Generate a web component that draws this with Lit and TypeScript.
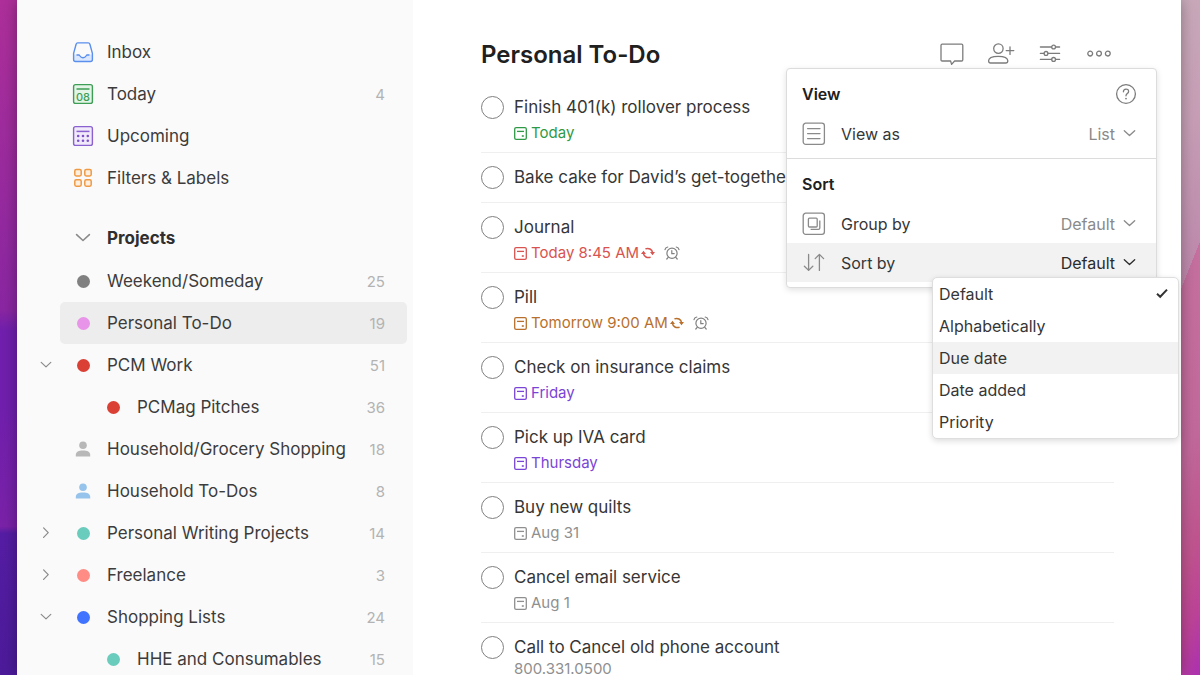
import { LitElement, html, css, svg, nothing } from "lit";
import { customElement, state } from "lit/decorators.js";
import { classMap } from "lit/directives/class-map.js";
import { styleMap } from "lit/directives/style-map.js";

type Tone = "green" | "red" | "orange" | "purple" | "grey";

interface Task {
  title: string;
  due?: string;
  tone?: Tone;
  repeats?: boolean;
  note?: string;
}

interface Project {
  name: string;
  count: number;
  color: string;
  person?: boolean;
  child?: boolean;
  chevron?: "open" | "closed";
}

const TASKS: Task[] = [
  { title: "Finish 401(k) rollover process", due: "Today", tone: "green" },
  { title: "Bake cake for David’s get-together" },
  { title: "Journal", due: "Today 8:45 AM", tone: "red", repeats: true },
  { title: "Pill", due: "Tomorrow 9:00 AM", tone: "orange", repeats: true },
  { title: "Check on insurance claims", due: "Friday", tone: "purple" },
  { title: "Pick up IVA card", due: "Thursday", tone: "purple" },
  { title: "Buy new quilts", due: "Aug 31", tone: "grey" },
  { title: "Cancel email service", due: "Aug 1", tone: "grey" },
  { title: "Call to Cancel old phone account", note: "800.331.0500" },
];

const PROJECTS: Project[] = [
  { name: "Weekend/Someday", count: 25, color: "#808080" },
  { name: "Personal To-Do", count: 19, color: "#e894e8" },
  { name: "PCM Work", count: 51, color: "#db4035", chevron: "open" },
  { name: "PCMag Pitches", count: 36, color: "#db4035", child: true },
  { name: "Household/Grocery Shopping", count: 18, color: "#b8b8b8", person: true },
  { name: "Household To-Dos", count: 8, color: "#96c3eb", person: true },
  { name: "Personal Writing Projects", count: 14, color: "#6accbc", chevron: "closed" },
  { name: "Freelance", count: 3, color: "#ff8d85", chevron: "closed" },
  { name: "Shopping Lists", count: 24, color: "#4073ff", chevron: "open" },
  { name: "HHE and Consumables", count: 15, color: "#6accbc", child: true },
];

const SORT_OPTIONS = ["Default", "Alphabetically", "Due date", "Date added", "Priority"];

const inboxIcon = svg`<svg width="24" height="24" viewBox="0 0 24 24" fill="none" stroke="#5a8fee" stroke-width="1.4" stroke-linejoin="round" stroke-linecap="round">
  <path d="M2.7 14.6 H7.6 C8.4 14.6 8.2 17.6 11.7 17.6 C15.2 17.6 15 14.6 15.8 14.6 H21.3 V19.6 Q21.3 21.4 19.5 21.4 H4.5 Q2.7 21.4 2.7 19.6 Z" fill="#dbe8fd" stroke="none"/>
  <path d="M6.7 2.9 H17.3 Q18.5 2.9 18.9 4.2 L21.4 13.4 V19.6 Q21.4 21.5 19.5 21.5 H4.5 Q2.6 21.5 2.6 19.6 V13.4 L5.1 4.2 Q5.5 2.9 6.7 2.9 Z"/>
  <path d="M6 15 H8 C8.8 15 9 17.8 12 17.8 C15 17.8 15.2 15 16 15 H18"/></svg>`;

const todayIcon = svg`<svg width="24" height="24" viewBox="0 0 24 24" fill="none" stroke="#3f9e55" stroke-width="1.4">
  <rect x="2.6" y="2.6" width="18.8" height="18.8" rx="2" fill="#e4f4e7"/>
  <path d="M5.5 7 H18.5" stroke-width="1.5"/>
  <text x="12" y="18.8" text-anchor="middle" font-family="Inter, sans-serif" font-size="11" font-weight="500" fill="#3f9e55" stroke="none">08</text></svg>`;

const upcomingIcon = svg`<svg width="24" height="24" viewBox="0 0 24 24" fill="none" stroke="#8a62cf" stroke-width="1.4">
  <rect x="2.6" y="2.6" width="18.8" height="18.8" rx="2" fill="#f1eafb"/>
  <path d="M5.5 7.4 H18.5" stroke-width="1.5"/>
  <g fill="#7d52c8" stroke="none"><circle cx="7.2" cy="12" r="1.3"/><circle cx="12" cy="12" r="1.3"/><circle cx="16.8" cy="12" r="1.3"/><circle cx="7.2" cy="16.8" r="1.3"/><circle cx="12" cy="16.8" r="1.3"/><circle cx="16.8" cy="16.8" r="1.3"/></g></svg>`;

const filtersIcon = svg`<svg width="24" height="24" viewBox="0 0 24 24" fill="#fdf0e0" stroke="#ef9a45" stroke-width="1.5">
  <rect x="3.8" y="3.6" width="6.4" height="6.4" rx="1.4"/><rect x="13.8" y="3.6" width="6.4" height="6.4" rx="1.4"/>
  <rect x="3.8" y="13.8" width="6.4" height="6.4" rx="1.4"/><rect x="13.8" y="13.8" width="6.4" height="6.4" rx="1.4"/></svg>`;

const NAV = [
  { name: "Inbox", icon: inboxIcon },
  { name: "Today", icon: todayIcon, count: 4 },
  { name: "Upcoming", icon: upcomingIcon },
  { name: "Filters & Labels", icon: filtersIcon },
];

const personIcon = svg`<svg width="16" height="16" viewBox="0 0 16 16" fill="currentColor">
  <circle cx="8" cy="4.2" r="3.8"/><path d="M.8 15.4 V14 C.8 11 3.5 9.6 8 9.6 S15.2 11 15.2 14 V15.4 Z"/></svg>`;

const chevronDown = (w: number) => svg`<svg width=${w} height=${w} viewBox="0 0 14 14" fill="none" stroke="currentColor" stroke-width="1.4" stroke-linecap="round" stroke-linejoin="round"><path d="M1.4 4 L7 9.2 L12.6 4"/></svg>`;
const chevronRight = svg`<svg width="12" height="12" viewBox="0 0 14 14" fill="none" stroke="currentColor" stroke-width="1.4" stroke-linecap="round" stroke-linejoin="round"><path d="M4.2 1 L9.6 6.6 L4.2 12.2"/></svg>`;

const dueIcon = svg`<svg width="13" height="13" viewBox="0 0 13 13" fill="none" stroke="currentColor" stroke-width="1.3">
  <rect x=".7" y=".7" width="11.6" height="11.6" rx="1.4"/><path d="M3 4.4 H10"/><path d="M7.8 9 H9.8" stroke-width="1.6"/></svg>`;
const repeatIcon = svg`<svg width="14" height="12" viewBox="0 0 14 12" fill="none" stroke="currentColor" stroke-width="1.5">
  <path d="M4.4 1.9 C7.6 .6 11.2 2.2 11.6 6"/><path d="M9.6 10.1 C6.4 11.4 2.8 9.8 2.4 6"/>
  <path d="M9 5 H14 L11.5 8.2 Z M0 7 H5 L2.5 3.8 Z" fill="currentColor" stroke="none"/></svg>`;
const alarmIcon = svg`<svg width="16" height="14" viewBox="0 0 16 14" fill="none" stroke="#808080" stroke-width="1.2" stroke-linecap="round">
  <circle cx="8" cy="7.2" r="5.1"/><path d="M7.8 4.6 V7.6 H10.2"/><path d="M1 3.6 Q1.4 1.4 3.8 1 M15 3.6 Q14.6 1.4 12.2 1 M4.2 11.4 L2.8 13 M11.8 11.4 L13.2 13"/></svg>`;

const commentIcon = svg`<svg width="26" height="26" viewBox="0 0 26 26" fill="none" stroke="currentColor" stroke-width="1.3" stroke-linejoin="round">
  <path d="M3.2 3.2 H22.6 Q23.8 3.2 23.8 4.4 V18.8 Q23.8 20 22.6 20 H15.6 L12.6 23.4 L11.6 20 H3.2 Q2 20 2 18.8 V4.4 Q2 3.2 3.2 3.2 Z"/></svg>`;
const shareIcon = svg`<svg width="28" height="26" viewBox="0 0 28 26" fill="none" stroke="currentColor" stroke-width="1.3" stroke-linecap="round" stroke-linejoin="round">
  <circle cx="11.4" cy="7.6" r="4.7"/><path d="M1.6 19.8 C1.6 16.6 5.6 15.3 11.2 15.3 S20.8 16.6 20.8 19.8 Q20.8 22 18.8 22 H3.6 Q1.6 22 1.6 19.8 Z"/><path d="M23 5.8 V13.4 M19.2 9.6 H26.8"/></svg>`;
const viewIcon = svg`<svg width="22" height="22" viewBox="0 0 22 22" fill="none" stroke="currentColor" stroke-width="1.3" stroke-linecap="round">
  <path d="M1.4 4 H12.6 M16.6 4 H20.6 M1.4 10.4 H5 M9 10.4 H20.6 M1.4 16.4 H12.6 M16.6 16.4 H20.6"/>
  <circle cx="14.6" cy="4" r="1.9"/><circle cx="7" cy="10.4" r="1.9"/><circle cx="14.6" cy="16.4" r="1.9"/></svg>`;
const moreIcon = svg`<svg width="24" height="8" viewBox="0 0 24 8" fill="none" stroke="currentColor" stroke-width="1.3">
  <circle cx="3.2" cy="3.6" r="2.4"/><circle cx="12" cy="3.6" r="2.4"/><circle cx="20.8" cy="3.6" r="2.4"/></svg>`;

const helpIcon = svg`<svg width="22" height="22" viewBox="0 0 22 22" fill="none" stroke="currentColor" stroke-width="1.3" stroke-linecap="round">
  <circle cx="11" cy="11" r="9.4"/><path d="M8.4 8.8 C8.4 5.2 13.6 5.2 13.6 8.4 C13.6 10.6 11 10.6 11 12.8"/><circle cx="11" cy="15.6" r=".9" fill="currentColor" stroke="none"/></svg>`;
const listIcon = svg`<svg width="24" height="24" viewBox="0 0 24 24" fill="none" stroke="currentColor" stroke-width="1.3" stroke-linecap="round">
  <rect x="1.2" y="1.2" width="21.2" height="21.2" rx="2.6"/><path d="M5.6 6.6 H18 M5.6 11.6 H18 M5.6 16.6 H18"/></svg>`;
const groupIcon = svg`<svg width="24" height="24" viewBox="0 0 24 24" fill="none" stroke="currentColor" stroke-width="1.3">
  <rect x="1.2" y="1.2" width="21.2" height="21.2" rx="2.6"/><rect x="6.4" y="6.2" width="8.8" height="8.8" rx="1"/><path d="M17.8 8.4 V16 Q17.8 17.4 16.4 17.4 H8.6"/></svg>`;
const sortIcon = svg`<svg width="24" height="24" viewBox="0 0 24 24" fill="none" stroke="currentColor" stroke-width="1.3" stroke-linecap="round" stroke-linejoin="round">
  <path d="M6.6 3.4 V19.4 M2.4 15.2 L6.6 19.4 L10.8 15.2 M17.4 19.4 V3.4 M13.2 7.6 L17.4 3.4 L21.6 7.6"/></svg>`;
const checkIcon = svg`<svg width="12" height="12" viewBox="0 0 12 12" fill="none" stroke="#333" stroke-width="2"><path d="M1 5.8 L4.2 8.8 L11 1.6"/></svg>`;

@customElement("app-sidebar")
class AppSidebar extends LitElement {
  static styles = css`
    :host { display: block; background: #fafafa; color: #3c3c3c; }
    .nav { padding: 31px 6px 0 14px; }
    .list { list-style: none; margin: 0; padding: 0; }
    .row { display: flex; height: 42px; }
    .fold, .gutter { flex: none; width: 29px; }
    .fold { display: flex; align-items: center; justify-content: center; border: 0; padding: 0; background: none; color: #8a8a8a; }
    .link { flex: 1; min-width: 0; display: flex; align-items: center; gap: 12px; padding: 0 22px 0 11px; border-radius: 5px; color: inherit; text-decoration: none; font-size: 17px; }
    .link.current { background: #ededed; }
    .link.child { padding-left: 41px; }
    .icon { flex: none; width: 24px; height: 24px; display: flex; align-items: center; justify-content: center; }
    .label { flex: 1; white-space: nowrap; }
    .count { font-size: 15px; color: #b3b3b3; }
    .dot { width: 13px; height: 13px; border-radius: 50%; }
    .head { display: flex; align-items: center; height: 44px; margin: 17px 0 0 29px; }
    .head-button { display: flex; align-items: center; gap: 12px; border: 0; padding: 0 11px; background: none; font: inherit; color: #8a8a8a; }
    .head-label { font-size: 17px; font-weight: 700; color: #2f2f2f; }
  `;

  render() {
    return html`<nav class="nav" aria-label="Main">
      <ul class="list">
        ${NAV.map((n) => html`<li class="row"><span class="gutter"></span>
          <a class="link" href="#"><span class="icon">${n.icon}</span><span class="label">${n.name}</span>
          ${n.count ? html`<span class="count">${n.count}</span>` : nothing}</a></li>`)}
      </ul>
      <div class="head"><button class="head-button" aria-expanded="true"><span class="icon">${chevronDown(16)}</span><span class="head-label">Projects</span></button></div>
      <ul class="list">
        ${PROJECTS.map((p) => html`<li class="row">
          ${p.chevron
            ? html`<button class="fold" aria-label=${p.name} aria-expanded=${p.chevron === "open"}>${p.chevron === "open" ? chevronDown(12) : chevronRight}</button>`
            : html`<span class="gutter"></span>`}
          <a href="#" class=${classMap({ link: true, child: !!p.child, current: p.name === "Personal To-Do" })}>
            ${p.person
              ? html`<span class="icon" style=${styleMap({ color: p.color })}>${personIcon}</span>`
              : html`<span class="icon"><span class="dot" style=${styleMap({ background: p.color })}></span></span>`}
            <span class="label">${p.name}</span><span class="count">${p.count}</span></a></li>`)}
      </ul>
    </nav>`;
  }
}

@customElement("task-list")
class TaskList extends LitElement {
  static styles = css`
    :host { display: block; }
    .list { list-style: none; margin: 0; padding: 0; }
    .task { display: flex; gap: 10px; box-sizing: border-box; min-height: 50px; padding: 12px 0 9px; border-bottom: 1px solid #efefef; }
    .check { appearance: none; flex: none; box-sizing: border-box; width: 23px; height: 23px; margin: 1px 0 0; border: 1px solid #808080; border-radius: 50%; background: #fff; }
    .title { display: block; font-size: 17px; line-height: 24px; color: #363636; white-space: nowrap; }
    .meta { display: flex; align-items: center; gap: 4px; margin-top: 4px; font-size: 15px; line-height: 20px; white-space: nowrap; }
    .note { font-size: 15px; line-height: 20px; color: #8f8f8f; }
    .marks { display: flex; align-items: center; gap: 9px; margin-left: -2px; }
    .green { color: #2f9a45; }
    .red { color: #d9534f; }
    .orange { color: #b8702c; }
    .purple { color: #7a45d6; }
    .grey { color: #8f8f8f; }
  `;

  render() {
    return html`<ul class="list">${TASKS.map((t, i) => html`<li class="task">
      <input class="check" type="checkbox" id="task-${i}">
      <div>
        <label class="title" for="task-${i}">${t.title}</label>
        ${t.due ? html`<div class="meta ${t.tone ?? "grey"}">${dueIcon}<span>${t.due}</span>
          ${t.repeats ? html`<span class="marks">${repeatIcon}${alarmIcon}</span>` : nothing}</div>` : nothing}
        ${t.note ? html`<div class="note">${t.note}</div>` : nothing}
      </div></li>`)}</ul>`;
  }
}

@customElement("view-menu")
class ViewMenu extends LitElement {
  @state() private sort = "Default";
  @state() private hovered = "Due date";

  static styles = css`
    :host { display: block; color: #363636; }
    .panel { box-sizing: border-box; width: 371px; background: #fff; border: 1px solid #dcdcdc; border-radius: 4px; box-shadow: 0 2px 6px rgba(0, 0, 0, 0.12); }
    .section { padding: 5px 0; }
    .section + .section { border-top: 1px solid #dcdcdc; }
    .head { display: flex; align-items: center; justify-content: space-between; height: 40px; padding: 0 19px 0 15px; }
    .heading { margin: 0; font-size: 16px; font-weight: 600; color: #202020; }
    .help { display: flex; border: 0; padding: 0; background: none; color: #7c7c7c; }
    .row { display: flex; align-items: center; height: 39px; padding: 0 20px 0 15px; font-size: 16px; }
    .row.active { background: #f2f2f2; }
    .icon { display: flex; width: 24px; margin-right: 15px; color: #8a8a8a; }
    .name { flex: 1; }
    .value { appearance: none; border: 0; padding: 0; margin: 0 8px 0 0; background: none; font: inherit; color: #8a8a8a; text-align: right; text-align-last: right; }
    .arrow { display: flex; color: #8a8a8a; }
    .row.active .value, .row.active .arrow { color: #2b2b2b; }
    .options { position: absolute; top: 209px; right: -22px; z-index: 1; box-sizing: border-box; width: 247px; background: #fff; border: 1px solid #dedede; border-radius: 5px; box-shadow: 0 2px 6px rgba(0, 0, 0, 0.14); overflow: hidden; }
    .option { display: flex; align-items: center; justify-content: space-between; width: 100%; height: 32px; border: 0; padding: 0 10px 0 6px; background: none; font: inherit; font-size: 16px; color: #363636; text-align: left; }
    .option.hovered { background: #f2f2f2; }
  `;

  private row(id: string, icon: unknown, name: string, value: string, options: string[], active = false) {
    return html`<div class=${classMap({ row: true, active })}>
      <span class="icon">${icon}</span><label class="name" for=${id}>${name}</label>
      <select class="value" id=${id}>${options.map((o) => html`<option ?selected=${o === value}>${o}</option>`)}</select>
      <span class="arrow">${chevronDown(13)}</span></div>`;
  }

  render() {
    return html`<div class="panel">
        <section class="section">
          <div class="head"><h2 class="heading">View</h2><button class="help" aria-label="Help">${helpIcon}</button></div>
          ${this.row("view-as", listIcon, "View as", "List", ["List"])}
        </section>
        <section class="section">
          <div class="head"><h2 class="heading">Sort</h2></div>
          ${this.row("group-by", groupIcon, "Group by", "Default", ["Default"])}
          ${this.row("sort-by", sortIcon, "Sort by", this.sort, SORT_OPTIONS, true)}
        </section>
      </div>
      <div class="options" role="listbox" aria-label="Sort by">
        ${SORT_OPTIONS.map((o) => html`<button role="option" aria-selected=${o === this.sort}
          class=${classMap({ option: true, hovered: o === this.hovered })}
          @mouseenter=${() => (this.hovered = o)} @click=${() => (this.sort = o)}>
          <span>${o}</span>${o === this.sort ? checkIcon : nothing}</button>`)}
      </div>`;
  }
}

@customElement("app-root")
class AppRoot extends LitElement {
  static styles = css`
    :host {
      display: block; box-sizing: border-box; height: 100vh; overflow: hidden; padding: 0 19px 0 17px;
      font-family: Inter, "Liberation Sans", sans-serif;
      background:
        linear-gradient(180deg, #ae2f9a 0, #9a2b9e 25%, #8a26a2 46%, #701fae 49%, #701fae 60%, #7a22a8 78%, #551da4 79%, #4c1b9a 100%) left / 17px 100% no-repeat,
        linear-gradient(112deg, #c9abbb 0, #c79fb6 20%, #bf8bae 40%, #c5709f 40%, #c2699b 65%, #c0548f 80%, #bd4398 90%, #ac30b2 100%) right / 19px 100% no-repeat;
    }
    .window { display: grid; grid-template-columns: 396px 1fr; height: 100%; background: #fff; box-shadow: 0 0 14px rgba(0, 0, 0, 0.35); }
    .main { position: relative; min-width: 0; padding: 31px 67px 0 68px; }
    .bar { display: flex; align-items: center; justify-content: space-between; height: 48px; margin-bottom: 4px; }
    .title { margin: 0; font-size: 24px; line-height: 30px; font-weight: 600; color: #202020; }
    .tools { display: flex; gap: 19px; }
    .tool { display: flex; align-items: center; justify-content: center; width: 30px; height: 30px; border: 0; padding: 0 0 2px; background: none; color: #7c7c7c; }
    .menu { position: absolute; top: 68px; right: 24px; }
  `;

  render() {
    return html`<div class="window">
      <app-sidebar></app-sidebar>
      <main class="main">
        <header class="bar">
          <h1 class="title">Personal To-Do</h1>
          <div class="tools">
            <button class="tool" aria-label="Comments">${commentIcon}</button>
            <button class="tool" aria-label="Share">${shareIcon}</button>
            <button class="tool" aria-label="View options">${viewIcon}</button>
            <button class="tool" aria-label="More">${moreIcon}</button>
          </div>
        </header>
        <task-list></task-list>
        <view-menu class="menu"></view-menu>
      </main>
    </div>`;
  }
}
